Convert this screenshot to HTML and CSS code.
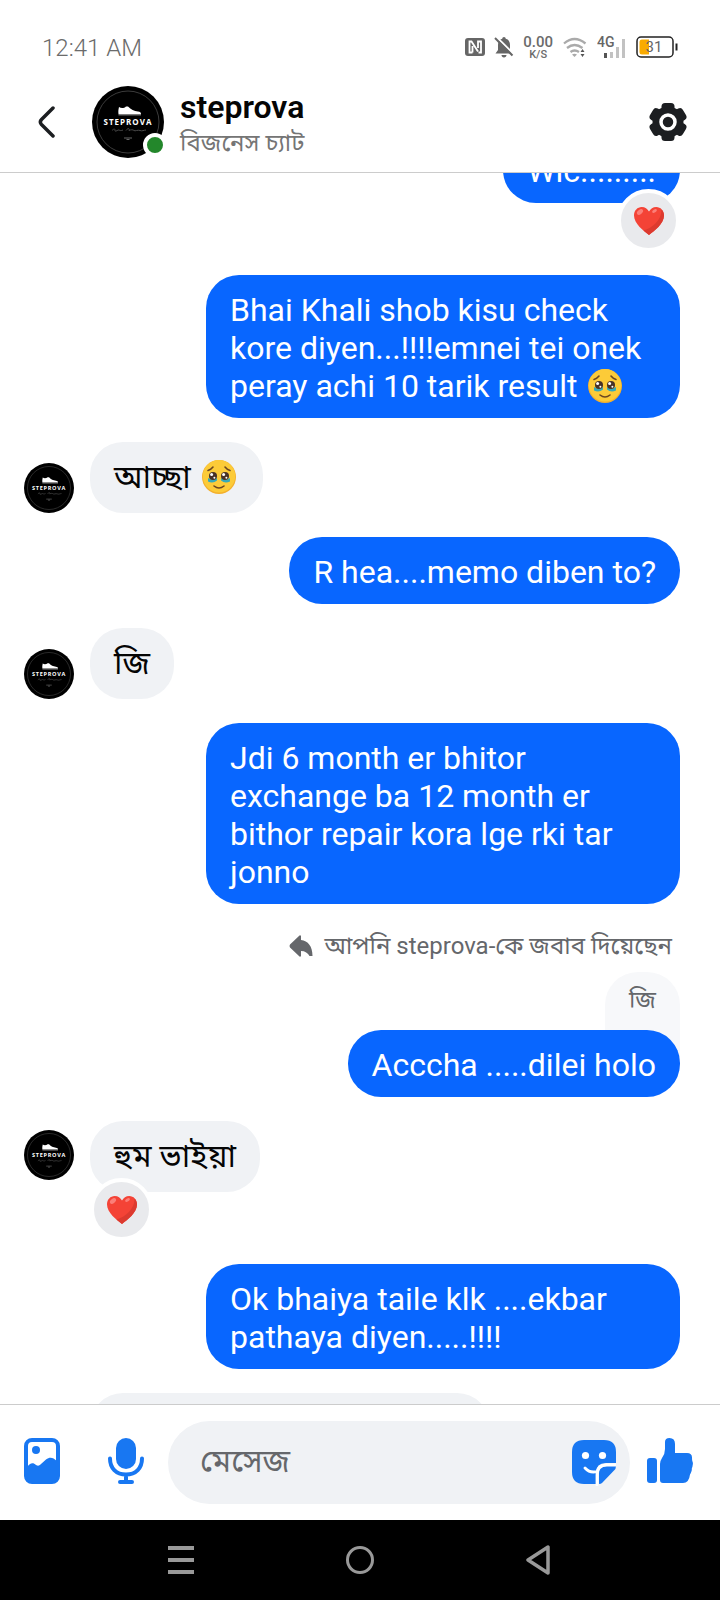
FILE: index.html
```html
<!DOCTYPE html>
<html lang="bn">
<head>
<meta charset="utf-8">
<meta name="viewport" content="width=device-width, initial-scale=1">
<title>steprova</title>
<link rel="stylesheet" href="styles.css">
</head>
<body>
<svg class="defs" aria-hidden="true">
  <symbol id="logo" viewBox="0 0 72 72">
    <circle cx="36" cy="36" r="36" fill="#000"/>
    <circle cx="36" cy="36" r="31" fill="none" stroke="#3c3c3c" stroke-width="1"/>
    <path d="M27 21c2 1.500 5 1.500 7-.6l2 .2c3 3 6 4.600 10 5 2 .3 3 1 3 2.600H26.500c-.4-3 0-5 .5-7.200z" fill="#fff"/>
    <path d="M26.500 28.500H49v.8H26.500z" fill="#bbb"/>
    <text x="36" y="39" text-anchor="middle" class="logo-name">STEPROVA</text>
    <path d="M20 44.500c2-2 3-2 3 0s3-1 4-.5 2 1 4 0M34 44.500c2-3 4-2 3 0 2-1 4-1 5 0s4-1 6 0 4-.5 6-.5" fill="none" stroke="#4a4a4a" stroke-width="1"/>
    <path d="M32 52h8M34.500 53.500h3" stroke="#666" stroke-width="1"/>
  </symbol>
  <symbol id="heart" viewBox="0 0 32 30">
    <path d="M16 29C11 25 1 18 1 9.500 1 4.500 4.500 1 8.700 1 12 1 14.500 2.800 16 5.500 17.500 2.800 20 1 23.300 1 27.500 1 31 4.500 31 9.500 31 18 21 25 16 29z" fill="#f44336"/>
    <path d="M28.500 3.500C30 5 31 7 31 9.500 31 18 21 25 16 29c-1.500-1.200-3.500-2.700-5.500-4.500C19 22 29 14 28.500 3.500z" fill="#dc3a2f"/>
    <ellipse cx="7" cy="6" rx="3.500" ry="2.200" transform="rotate(-38 7 6)" fill="#fb7f78"/>
    <ellipse cx="21.500" cy="5" rx="2.600" ry="1.500" transform="rotate(-30 21.500 5)" fill="#fb7f78"/>
  </symbol>
  <symbol id="tearful" viewBox="0 0 36 36">
    <circle cx="18" cy="18" r="17" fill="#f4b02c"/>
    <circle cx="18" cy="17.300" r="16.200" fill="#fccb38"/>
    <path d="M7 19q5 3 9 0v2.500q-4 3.500-9 1zM20 19q4 3 9 0v3.500q-5 2.500-9-1z" fill="#35a9b9"/>
    <circle cx="12" cy="17" r="4" fill="#473127"/>
    <circle cx="24" cy="17" r="4" fill="#473127"/>
    <circle cx="10.600" cy="15.500" r="1.500" fill="#fff"/>
    <circle cx="22.600" cy="15.500" r="1.500" fill="#fff"/>
    <circle cx="13.400" cy="18.700" r="1" fill="#fff"/>
    <circle cx="25.400" cy="18.700" r="1" fill="#fff"/>
    <path d="M7 11.500Q10 10.500 12 8M29 11.500Q26 10.500 24 8M13 27q5 4 10 0" fill="none" stroke="#6b4722" stroke-width="1.600" stroke-linecap="round"/>
  </symbol>
</svg>

<div class="status">
  <time class="clock">12:41 AM</time>
  <div class="indicators">
    <svg width="20" height="20" viewBox="0 0 20 20" role="img" aria-label="NFC"><rect y="1" width="20" height="18" rx="3" fill="#666"/><path d="M7.500 15.500H4.500V4.500h2l6.500 10M7.500 9v6.500M13 11V4.500h3v11h-2.500" fill="none" stroke="#fff" stroke-width="1.800"/></svg>
    <svg width="20" height="22" viewBox="0 0 20 22" role="img" aria-label="Silent"><path d="M10 1c1 0 1.700.7 1.700 1.800C14.800 3.500 16 6 16 9v5l2.500 3.500h-17L4 14V9c0-3 1.500-5.500 4.300-6.200C8.300 1.700 9 1 10 1zM7.500 19h5c0 1.500-1 2.500-2.500 2.500S7.500 20.500 7.500 19z" fill="#666"/><path d="M2.500 1 19.500 18" stroke="#fff" stroke-width="2"/><path d="M1 2 18.500 19.500" stroke="#666" stroke-width="2"/></svg>
    <div class="speed"><span class="rate">0.00</span><span class="unit">K/S</span></div>
    <svg width="26" height="22" viewBox="0 0 26 22" role="img" aria-label="Wi-Fi"><path d="M2 7.500q10.500-9 21.500 0M5 12q7.500-6 15.500 0M8.500 16q4-3 8.500 0" fill="none" stroke="#aaa" stroke-width="2.300"/><path d="M10 18.500q2.500-1.600 5 0L12.500 21z" fill="#aaa"/><path d="M18.500 16l2-3 2 3zM18.500 18l2 3 2-3z" fill="#555"/></svg>
    <svg width="30" height="24" viewBox="0 0 30 24" role="img" aria-label="4G"><text x="0" y="12" class="net">4G</text><path d="M7 18h3v5H7z" fill="#555"/><path d="M13 17h3v6h-3zM19 12h3v11h-3zM25 4h3v19h-3z" fill="#c2c2c2"/></svg>
    <svg width="42" height="22" viewBox="0 0 42 22" role="img" aria-label="31%"><rect x="1" y="1" width="36" height="20" rx="4" fill="#fff" stroke="#222" stroke-width="1.500"/><path d="M6 3.500h7v15H6a2.500 2.500 0 0 1-2.500-2.500V6A2.500 2.500 0 0 1 6 3.500z" fill="#f9ab00"/><path d="M39.500 7.500h2v7h-2z" fill="#222"/><text x="18" y="16" text-anchor="middle" class="level">31</text></svg>
  </div>
</div>

<header class="header">
  <button class="icon-btn back" aria-label="Back"><svg width="18" height="32" viewBox="0 0 18 32"><path d="M15 2 3.500 13.500q-2.300 2.500 0 5L15 30" fill="none" stroke="#1c1e21" stroke-width="3.500" stroke-linecap="round" stroke-linejoin="round"/></svg></button>
  <div class="profile-pic"><svg class="pic" role="img" aria-label="steprova"><use href="#logo"/></svg><span class="online"></span></div>
  <div class="who">
    <h1 class="name">steprova</h1>
    <p class="sub">বিজনেস চ্যাট</p>
  </div>
  <button class="icon-btn" aria-label="Settings"><svg width="38" height="40" viewBox="-19 -20 38 40"><g fill="#1c1e21"><circle r="15.500"/><rect x="-6.500" y="-19" width="13" height="38" rx="3.500"/><rect x="-6.500" y="-19" width="13" height="38" rx="3.500" transform="rotate(60)"/><rect x="-6.500" y="-19" width="13" height="38" rx="3.500" transform="rotate(120)"/></g><circle r="7" fill="none" stroke="#fff" stroke-width="3.500"/></svg></button>
</header>

<main class="chat">
  <div class="row out first reacted"><p class="bubble">Wic.........<span class="reaction"><svg class="heart" role="img" aria-label="❤️"><use href="#heart"/></svg></span></p></div>
  <div class="row out"><p class="bubble">Bhai Khali shob kisu check kore diyen...!!!!emnei tei onek peray achi 10 tarik result <svg class="emoji" role="img" aria-label="🥹"><use href="#tearful"/></svg></p></div>
  <div class="row in"><svg class="avatar"><use href="#logo"/></svg><p class="bubble">আচ্ছা <svg class="emoji" role="img" aria-label="🥹"><use href="#tearful"/></svg></p></div>
  <div class="row out"><p class="bubble">R hea....memo diben to?</p></div>
  <div class="row in"><svg class="avatar"><use href="#logo"/></svg><p class="bubble">জি</p></div>
  <div class="row out"><p class="bubble">Jdi 6 month er bhitor exchange ba 12 month er bithor repair kora lge rki tar jonno</p></div>
  <div class="reply">
    <p class="reply-label"><svg width="24" height="22" viewBox="0 0 24 22"><path d="M12 1v4c7 1 11.500 6 11.500 16h-3c-1.500-3-4.500-5-8.500-5v5q-.5 1-1.500.5L1 12.500q-1-1.500 0-3L10.500.5q1-.5 1.500.5z" fill="#65676b"/></svg>আপনি steprova-কে জবাব দিয়েছেন</p>
    <p class="quote">জি</p>
    <div class="row out"><p class="bubble">Acccha .....dilei holo</p></div>
  </div>
  <div class="row in reacted"><svg class="avatar"><use href="#logo"/></svg><p class="bubble">হুম ভাইয়া<span class="reaction"><svg class="heart" role="img" aria-label="❤️"><use href="#heart"/></svg></span></p></div>
  <div class="row out"><p class="bubble">Ok bhaiya taile klk ....ekbar pathaya diyen.....!!!!</p></div>
  <div class="row in"><span class="avatar"></span><p class="bubble next"></p></div>
</main>

<form class="composer">
  <button type="button" class="icon-btn" aria-label="Photo"><svg width="36" height="46" viewBox="0 0 36 46"><rect x="2" y="2" width="32" height="42" rx="6" fill="#fff" stroke="#1877f2" stroke-width="4"/><circle cx="12" cy="12" r="4" fill="#1877f2"/><path d="M3 29c3-4 6-5 9-2 2 1 3 1 5-1l5-4.500c4-3 7-2 11 1.500v16q0 5-5 5H8q-5 0-5-5z" fill="#1877f2"/></svg></button>
  <button type="button" class="icon-btn mic" aria-label="Voice"><svg width="36" height="46" viewBox="0 0 36 46"><rect x="8" width="20" height="31" rx="10" fill="#1877f2"/><path d="M2 20.500C2 30 8 36.500 18 36.500S34 30 34 20.500M18 37v7M12 44h12" fill="none" stroke="#1877f2" stroke-width="4" stroke-linecap="round"/></svg></button>
  <div class="field">
    <input class="input" type="text" placeholder="মেসেজ" aria-label="মেসেজ">
    <button type="button" class="icon-btn" aria-label="Sticker"><svg width="44" height="46" viewBox="0 0 44 46"><path d="M12 0h20q12 0 12 12v11H34q-10 0-10 10v11H12Q0 44 0 32V12Q0 0 12 0z" fill="#1877f2"/><path d="M44 26H34q-7 0-7 7v11q2 0 3-1L42 30.500q2-1.500 2-4.500z" fill="#1877f2"/><circle cx="13.500" cy="15.500" r="3.600" fill="#fff"/><circle cx="30.500" cy="15.500" r="3.600" fill="#fff"/><path d="M13 28q5 5.500 12 3.500M25 45V35q0-10 10-10h9" fill="none" stroke="#fff" stroke-width="2.800" stroke-linecap="round"/></svg></button>
  </div>
  <button type="button" class="icon-btn like" aria-label="Like"><svg width="46" height="46" viewBox="0 0 46 46"><rect y="20" width="10" height="25" rx="3" fill="#1877f2"/><path d="M13 26q0-3 2-6 3-4 3-9V4q0-4 4.500-4Q28 0 28 6v9h12q5 0 5 4.500 0 2 .3 3.500 1 2 .4 4-.2 2-.9 3.500.2 2-.6 3.500-.6 1.500-1.200 2.500Q42 45 36 45H16q-3 0-3-3z" fill="#1877f2"/></svg></button>
</form>

<nav class="sysnav">
  <button class="icon-btn" aria-label="Recents"><svg width="28" height="30" viewBox="0 0 28 30"><path d="M1 3h26M1 15h26M1 27h26" stroke="#999" stroke-width="4"/></svg></button>
  <button class="icon-btn" aria-label="Home"><svg width="28" height="30" viewBox="0 0 28 30"><circle cx="14" cy="15" r="12.500" fill="none" stroke="#999" stroke-width="3"/></svg></button>
  <button class="icon-btn" aria-label="Back"><svg width="28" height="30" viewBox="0 0 28 30"><path d="M23 2v26L3 15z" fill="none" stroke="#999" stroke-width="3.500" stroke-linejoin="round"/></svg></button>
</nav>
</body>
</html>
```
FILE: styles.css
```css
* { box-sizing: border-box; margin: 0; padding: 0; }
body {
  display: flex;
  flex-direction: column;
  height: 100vh;
  background: #fff;
  color: #050505;
  font-family: Roboto, "Noto Sans", "Noto Sans Bengali", sans-serif;
}
svg { display: block; flex: none; }
.defs { display: none; }
.icon-btn { display: flex; flex: none; border: 0; background: none; }

.status {
  display: flex;
  flex: none;
  align-items: flex-end;
  justify-content: space-between;
  height: 64px;
  padding: 0 42px;
  color: #6b6b6b;
}
.clock { font-size: 24px; line-height: 32px; font-weight: 300; }
.indicators { display: flex; align-items: center; gap: 9px; height: 34px; }
.speed { display: flex; flex-direction: column; align-items: center; }
.rate { font-size: 15px; line-height: 14px; font-weight: 500; }
.unit { font-size: 11px; line-height: 11px; font-weight: 500; }
.net { font-size: 14px; font-weight: 500; fill: #666; }
.level { font-size: 15px; fill: #666; }

.header {
  display: flex;
  flex: none;
  align-items: center;
  height: 109px;
  padding: 8px 33px 0 38px;
  border-bottom: 1px solid #ccc;
}
.back { margin-right: 36px; }
.profile-pic { position: relative; margin-right: 16px; }
.pic { width: 72px; height: 72px; }
.online {
  position: absolute;
  right: -3px;
  bottom: 1px;
  width: 24px;
  height: 24px;
  border: 4px solid #fff;
  border-radius: 50%;
  background: #23872b;
}
.logo-name { font: 700 8px "Open Sans", sans-serif; letter-spacing: 1px; fill: #fff; }
.who { flex: 1; padding-top: 6px; }
.name { font-size: 32px; line-height: 36px; font-weight: 600; }
.sub { font-size: 24px; line-height: 36px; color: #757575; }

.chat {
  display: flex;
  flex: 1;
  flex-direction: column;
  gap: 24px;
  min-height: 0;
  overflow: hidden;
  padding: 0 40px 0 24px;
}
.row { display: flex; flex: none; align-items: flex-end; }
.out { justify-content: flex-end; }
.in { gap: 16px; }
.first { margin-top: -37px; }
.reacted { margin-bottom: 48px; }
.reacted .avatar { margin-bottom: 12px; }
.bubble {
  position: relative;
  max-width: calc(100% - 182px);
  padding: 16px 24px 13px;
  border-radius: 33px;
  font-size: 32px;
  line-height: 38px;
}
.out .bubble { background: #0866ff; color: #fff; }
.in .bubble { min-height: 71px; background: #f0f2f5; }
.avatar { width: 50px; height: 50px; }
.emoji { display: inline-block; width: 36px; height: 36px; margin: 0 2px; vertical-align: -7px; }
.reaction {
  position: absolute;
  bottom: -49px;
  display: flex;
  align-items: center;
  justify-content: center;
  width: 63px;
  height: 63px;
  border: 4px solid #fff;
  border-radius: 50%;
  background: #e9eaed;
}
.out .reaction { right: 0; }
.in .reaction { left: 0; }
.heart { width: 32px; height: 30px; }
.next { width: 400px; }

.reply { display: flex; flex: none; flex-direction: column; align-items: flex-end; }
.reply .row { align-self: stretch; position: relative; }
.reply-label {
  display: flex;
  align-items: center;
  gap: 12px;
  padding-right: 8px;
  margin-bottom: 8px;
  font-size: 24px;
  line-height: 36px;
  color: #65676b;
}
.quote {
  padding: 10px 24px 48px;
  margin-bottom: -36px;
  border-radius: 33px 33px 0 0;
  background: #f7f8fa;
  font-size: 24px;
  line-height: 36px;
  color: #65676b;
}

.composer {
  display: flex;
  flex: none;
  align-items: center;
  padding: 16px 27px 16px 24px;
  border-top: 1px solid #ccc;
}
.composer > .icon-btn { padding-bottom: 4px; }
.mic { margin: 0 24px 0 48px; }
.field {
  display: flex;
  flex: 1;
  align-items: center;
  min-width: 0;
  height: 83px;
  padding: 0 14px 0 32px;
  border-radius: 42px;
  background: #f0f2f5;
}
.input {
  flex: 1;
  min-width: 0;
  padding-bottom: 4px;
  border: 0;
  outline: 0;
  background: none;
  font: inherit;
  font-size: 32px;
  line-height: 44px;
}
.input::placeholder { color: #65676b; opacity: 1; }
.like { margin-left: 17px; }

.sysnav {
  display: flex;
  flex: none;
  align-items: center;
  justify-content: center;
  gap: 21%;
  height: 80px;
  background: #000;
}
```
